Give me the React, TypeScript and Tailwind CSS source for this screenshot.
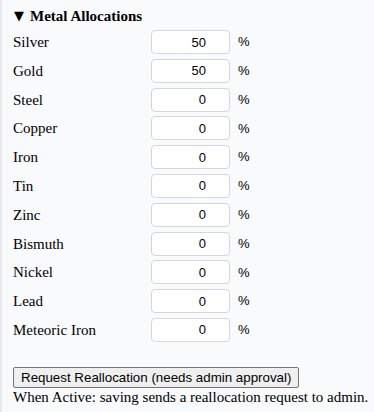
const metals: { name: string; value: number }[] = [
  { name: 'Silver', value: 50 },
  { name: 'Gold', value: 50 },
  { name: 'Steel', value: 0 },
  { name: 'Copper', value: 0 },
  { name: 'Iron', value: 0 },
  { name: 'Tin', value: 0 },
  { name: 'Zinc', value: 0 },
  { name: 'Bismuth', value: 0 },
  { name: 'Nickel', value: 0 },
  { name: 'Lead', value: 0 },
  { name: 'Meteoric Iron', value: 0 },
];

export default function App() {
  return (
    <div className="w-[374px] h-[412px] overflow-hidden bg-[#f9fafc] border-l-2 border-[#e6e8ee] font-['Liberation_Serif','Times_New_Roman',serif] text-[15px] text-black">
      <div className="pl-[11px] pt-[6px]">
        <div className="flex items-center font-bold leading-[20px]">
          <span className="text-[13px] ml-[1px] mr-[6px] font-['DejaVu_Sans',sans-serif]">▼</span>
          <span>Metal Allocations</span>
        </div>

        <div className="mt-[4px] flex flex-col gap-[4.8px]">
          {metals.map((m) => (
            <div key={m.name} className="flex items-center h-[24px]">
              <span className="w-[138px] leading-[18px]">{m.name}</span>
              <input
                type="text"
                readOnly
                value={m.value}
                className="w-[79px] h-[24px] rounded-[4px] border border-[#d4d6db] bg-white text-right pr-[23px] font-['Liberation_Sans',Arial,sans-serif] text-[13px] outline-none"
              />
              <span className="ml-[8px] font-['Liberation_Sans',Arial,sans-serif] text-[13px]">%</span>
            </div>
          ))}
        </div>

        <div className="mt-[24px]">
          <button className="h-[21px] px-[7px] rounded-[2px] border border-[#767676] bg-[#efefef] font-['Liberation_Sans',Arial,sans-serif] text-[13.33px] leading-[18px]">
            Request Reallocation (needs admin approval)
          </button>
        </div>
        <div className="leading-[18px]">When Active: saving sends a reallocation request to admin.</div>
      </div>
    </div>
  );
}
